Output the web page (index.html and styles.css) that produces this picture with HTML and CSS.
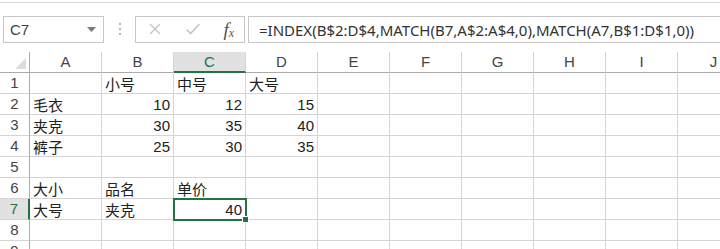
FILE: index.html
```html
<!DOCTYPE html>
<html lang="zh-CN">
<head>
  <meta charset="UTF-8">
  <meta name="viewport" content="width=device-width, initial-scale=1.0">
  <title>Sheet1</title>
  <link rel="stylesheet" href="styles.css">
</head>
<body>

  <!-- 编辑栏 -->
  <div class="formula-bar">
    <div class="name-box">
      <span class="name">C7</span>
      <svg class="drop" width="9" height="5" viewBox="0 0 9 5"><path d="M0 0h9L4.5 5z" fill="#7a7a7a"/></svg>
    </div>
    <div class="grip">
      <i></i><i></i><i></i>
    </div>
    <div class="buttons">
      <svg width="14" height="14" viewBox="0 0 14 14"><path d="M2 2l10 10M12 2L2 12" stroke="#c4c4c4" stroke-width="1.4"/></svg>
      <svg width="16" height="14" viewBox="0 0 16 14"><path d="M1.5 7.5l4 4L14.5 2" stroke="#c4c4c4" stroke-width="1.6" fill="none"/></svg>
      <span class="fx">f<sub>x</sub></span>
    </div>
    <div class="formula">=INDEX(B$2:D$4,MATCH(B7,A$2:A$4,0),MATCH(A7,B$1:D$1,0))</div>
  </div>

  <!-- 表格 -->
  <div class="sheet">
    <div class="corner"><span class="tri"></span></div>
    <div class="col-head">A</div>
    <div class="col-head">B</div>
    <div class="col-head on">C</div>
    <div class="col-head">D</div>
    <div class="col-head">E</div>
    <div class="col-head">F</div>
    <div class="col-head">G</div>
    <div class="col-head">H</div>
    <div class="col-head">I</div>
    <div class="col-head">J</div>

    <div class="row-head">1</div>
    <div class="cell"></div><div class="cell">小号</div><div class="cell">中号</div><div class="cell">大号</div>
    <div class="cell"></div><div class="cell"></div><div class="cell"></div><div class="cell"></div><div class="cell"></div><div class="cell"></div>

    <div class="row-head">2</div>
    <div class="cell">毛衣</div><div class="cell num">10</div><div class="cell num">12</div><div class="cell num">15</div>
    <div class="cell"></div><div class="cell"></div><div class="cell"></div><div class="cell"></div><div class="cell"></div><div class="cell"></div>

    <div class="row-head">3</div>
    <div class="cell">夹克</div><div class="cell num">30</div><div class="cell num">35</div><div class="cell num">40</div>
    <div class="cell"></div><div class="cell"></div><div class="cell"></div><div class="cell"></div><div class="cell"></div><div class="cell"></div>

    <div class="row-head">4</div>
    <div class="cell">裤子</div><div class="cell num">25</div><div class="cell num">30</div><div class="cell num">35</div>
    <div class="cell"></div><div class="cell"></div><div class="cell"></div><div class="cell"></div><div class="cell"></div><div class="cell"></div>

    <div class="row-head">5</div>
    <div class="cell"></div><div class="cell"></div><div class="cell"></div><div class="cell"></div>
    <div class="cell"></div><div class="cell"></div><div class="cell"></div><div class="cell"></div><div class="cell"></div><div class="cell"></div>

    <div class="row-head">6</div>
    <div class="cell">大小</div><div class="cell">品名</div><div class="cell">单价</div><div class="cell"></div>
    <div class="cell"></div><div class="cell"></div><div class="cell"></div><div class="cell"></div><div class="cell"></div><div class="cell"></div>

    <div class="row-head on">7</div>
    <div class="cell">大号</div><div class="cell">夹克</div><div class="cell num active">40<span class="handle"></span></div><div class="cell"></div>
    <div class="cell"></div><div class="cell"></div><div class="cell"></div><div class="cell"></div><div class="cell"></div><div class="cell"></div>

    <div class="row-head">8</div>
    <div class="cell"></div><div class="cell"></div><div class="cell"></div><div class="cell"></div>
    <div class="cell"></div><div class="cell"></div><div class="cell"></div><div class="cell"></div><div class="cell"></div><div class="cell"></div>

    <div class="row-head">9</div>
    <div class="cell"></div><div class="cell"></div><div class="cell"></div><div class="cell"></div>
    <div class="cell"></div><div class="cell"></div><div class="cell"></div><div class="cell"></div><div class="cell"></div><div class="cell"></div>
  </div>

</body>
</html>
```

FILE: styles.css
```css
*{
  box-sizing: border-box;
}

body{
  margin: 0;
  width: 720px;
  height: 249px;
  overflow: hidden;
  background: #fff;
  color: #222;
  font-family: "Noto Sans CJK SC", "Noto Sans", sans-serif;
}

.formula-bar{
  display: flex;
  align-items: center;
  height: 50px;
  padding: 13px 0 10px 3px;
  border-top: 1px solid #d6d6d6;
  margin-top: 2px;
}

.name-box{
  display: flex;
  align-items: center;
  justify-content: space-between;
  width: 101px;
  height: 27px;
  padding: 0 7px 0 6px;
  border: 1px solid #c6c6c6;
}

.name{
  font-family: "Liberation Sans", sans-serif;
  font-size: 15px;
  color: #444;
}

.grip{
  display: flex;
  flex-direction: column;
  gap: 3px;
  margin: 0 14px 0 15px;
}

.grip i{
  display: block;
  width: 2px;
  height: 2px;
  background: #b8b8b8;
}

.buttons{
  display: flex;
  align-items: center;
  justify-content: space-between;
  width: 110px;
  height: 27px;
  padding: 0 10px 0 12px;
  border: 1px solid #c6c6c6;
}

.fx{
  font-family: "Liberation Serif", serif;
  font-style: italic;
  font-size: 19px;
  color: #555;
  line-height: 1;
}

.fx sub{
  font-size: 12px;
  vertical-align: -1px;
}

.formula{
  flex: 1;
  height: 27px;
  margin-left: 3px;
  padding: 3px 0 0 10px;
  border: 1px solid #c6c6c6;
  border-right: 0;
  font-family: "Noto Sans", sans-serif;
  font-size: 15px;
  line-height: 20px;
  color: #333;
  white-space: nowrap;
}

.sheet{
  display: grid;
  grid-template-columns: 30px repeat(10, 72px);
  grid-auto-rows: 21px;
  font-size: 15px;
}

.corner,
.col-head,
.row-head,
.cell{
  border-right: 1px solid #d4d4d4;
  border-bottom: 1px solid #d4d4d4;
}

.corner{
  position: relative;
  border-bottom-color: #ababab;
  border-right-color: #ababab;
}

.tri{
  position: absolute;
  right: 3px;
  bottom: 3px;
  width: 0;
  height: 0;
  border-left: 11px solid transparent;
  border-bottom: 11px solid #dcdcdc;
}

.col-head{
  text-align: center;
  line-height: 20px;
  color: #444;
  font-family: "Liberation Sans", sans-serif;
  font-size: 15px;
  border-bottom-color: #ababab;
}

.col-head.on{
  background: #e1e1e1;
  color: #217346;
  border-bottom: 2px solid #217346;
}

.row-head{
  text-align: center;
  line-height: 20px;
  color: #444;
  font-family: "Liberation Sans", sans-serif;
  font-size: 15px;
  border-right-color: #ababab;
}

.row-head.on{
  background: #e1e1e1;
  color: #217346;
  border-right: 2px solid #217346;
}

.cell{
  padding: 0 3px;
  line-height: 21px;
  white-space: nowrap;
}

.num{
  text-align: right;
  font-family: "Liberation Sans", sans-serif;
  font-size: 15px;
}

.active{
  position: relative;
  outline: 2px solid #217346;
  outline-offset: -1px;
}

.handle{
  position: absolute;
  right: -4px;
  bottom: -4px;
  width: 7px;
  height: 7px;
  background: #217346;
  border: 1px solid #fff;
}
```
